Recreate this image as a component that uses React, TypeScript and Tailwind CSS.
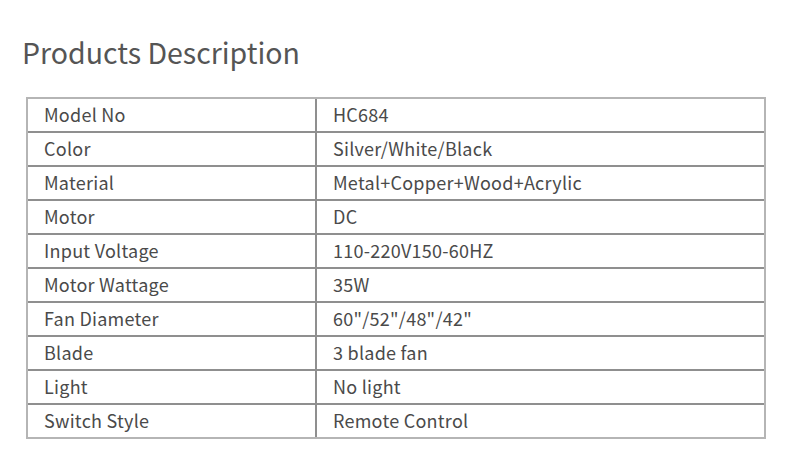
const rows: [string, string][] = [
  ["Model No", "HC684"],
  ["Color", "Silver/White/Black"],
  ["Material", "Metal+Copper+Wood+Acrylic"],
  ["Motor", "DC"],
  ["Input Voltage", "110-220V150-60HZ"],
  ["Motor Wattage", "35W"],
  ["Fan Diameter", '60"/52"/48"/42"'],
  ["Blade", "3 blade fan"],
  ["Light", "No light"],
  ["Switch Style", "Remote Control"],
];

export default function App() {
  return (
    <div
      className="w-[790px] h-[466px] bg-white text-[#4a4a4a]"
      style={{ fontFamily: '"Noto Sans CJK SC", "Noto Sans", sans-serif' }}
    >
      <h1 className="pl-[22px] pt-[33px] text-[28.5px] leading-[37px] text-[#555]">
        Products Description
      </h1>
      <div className="ml-[26px] mt-[27px] w-[740px] border-2 border-[#b5b5b5]">
        {rows.map(([label, value], i) => (
          <div
            key={label}
            className={`flex items-stretch text-[18px] tracking-[0.25px] ${
              i > 0 ? "h-[34px] border-t-2 border-[#8f8f8f]" : "h-[32px]"
            }`}
          >
            <div className="w-[289px] flex items-center pl-[16px] pb-[1px] border-r-2 border-[#8f8f8f]">
              {label}
            </div>
            <div className="flex-1 flex items-center pl-[16px] pb-[1px]">
              {value}
            </div>
          </div>
        ))}
      </div>
    </div>
  );
}
